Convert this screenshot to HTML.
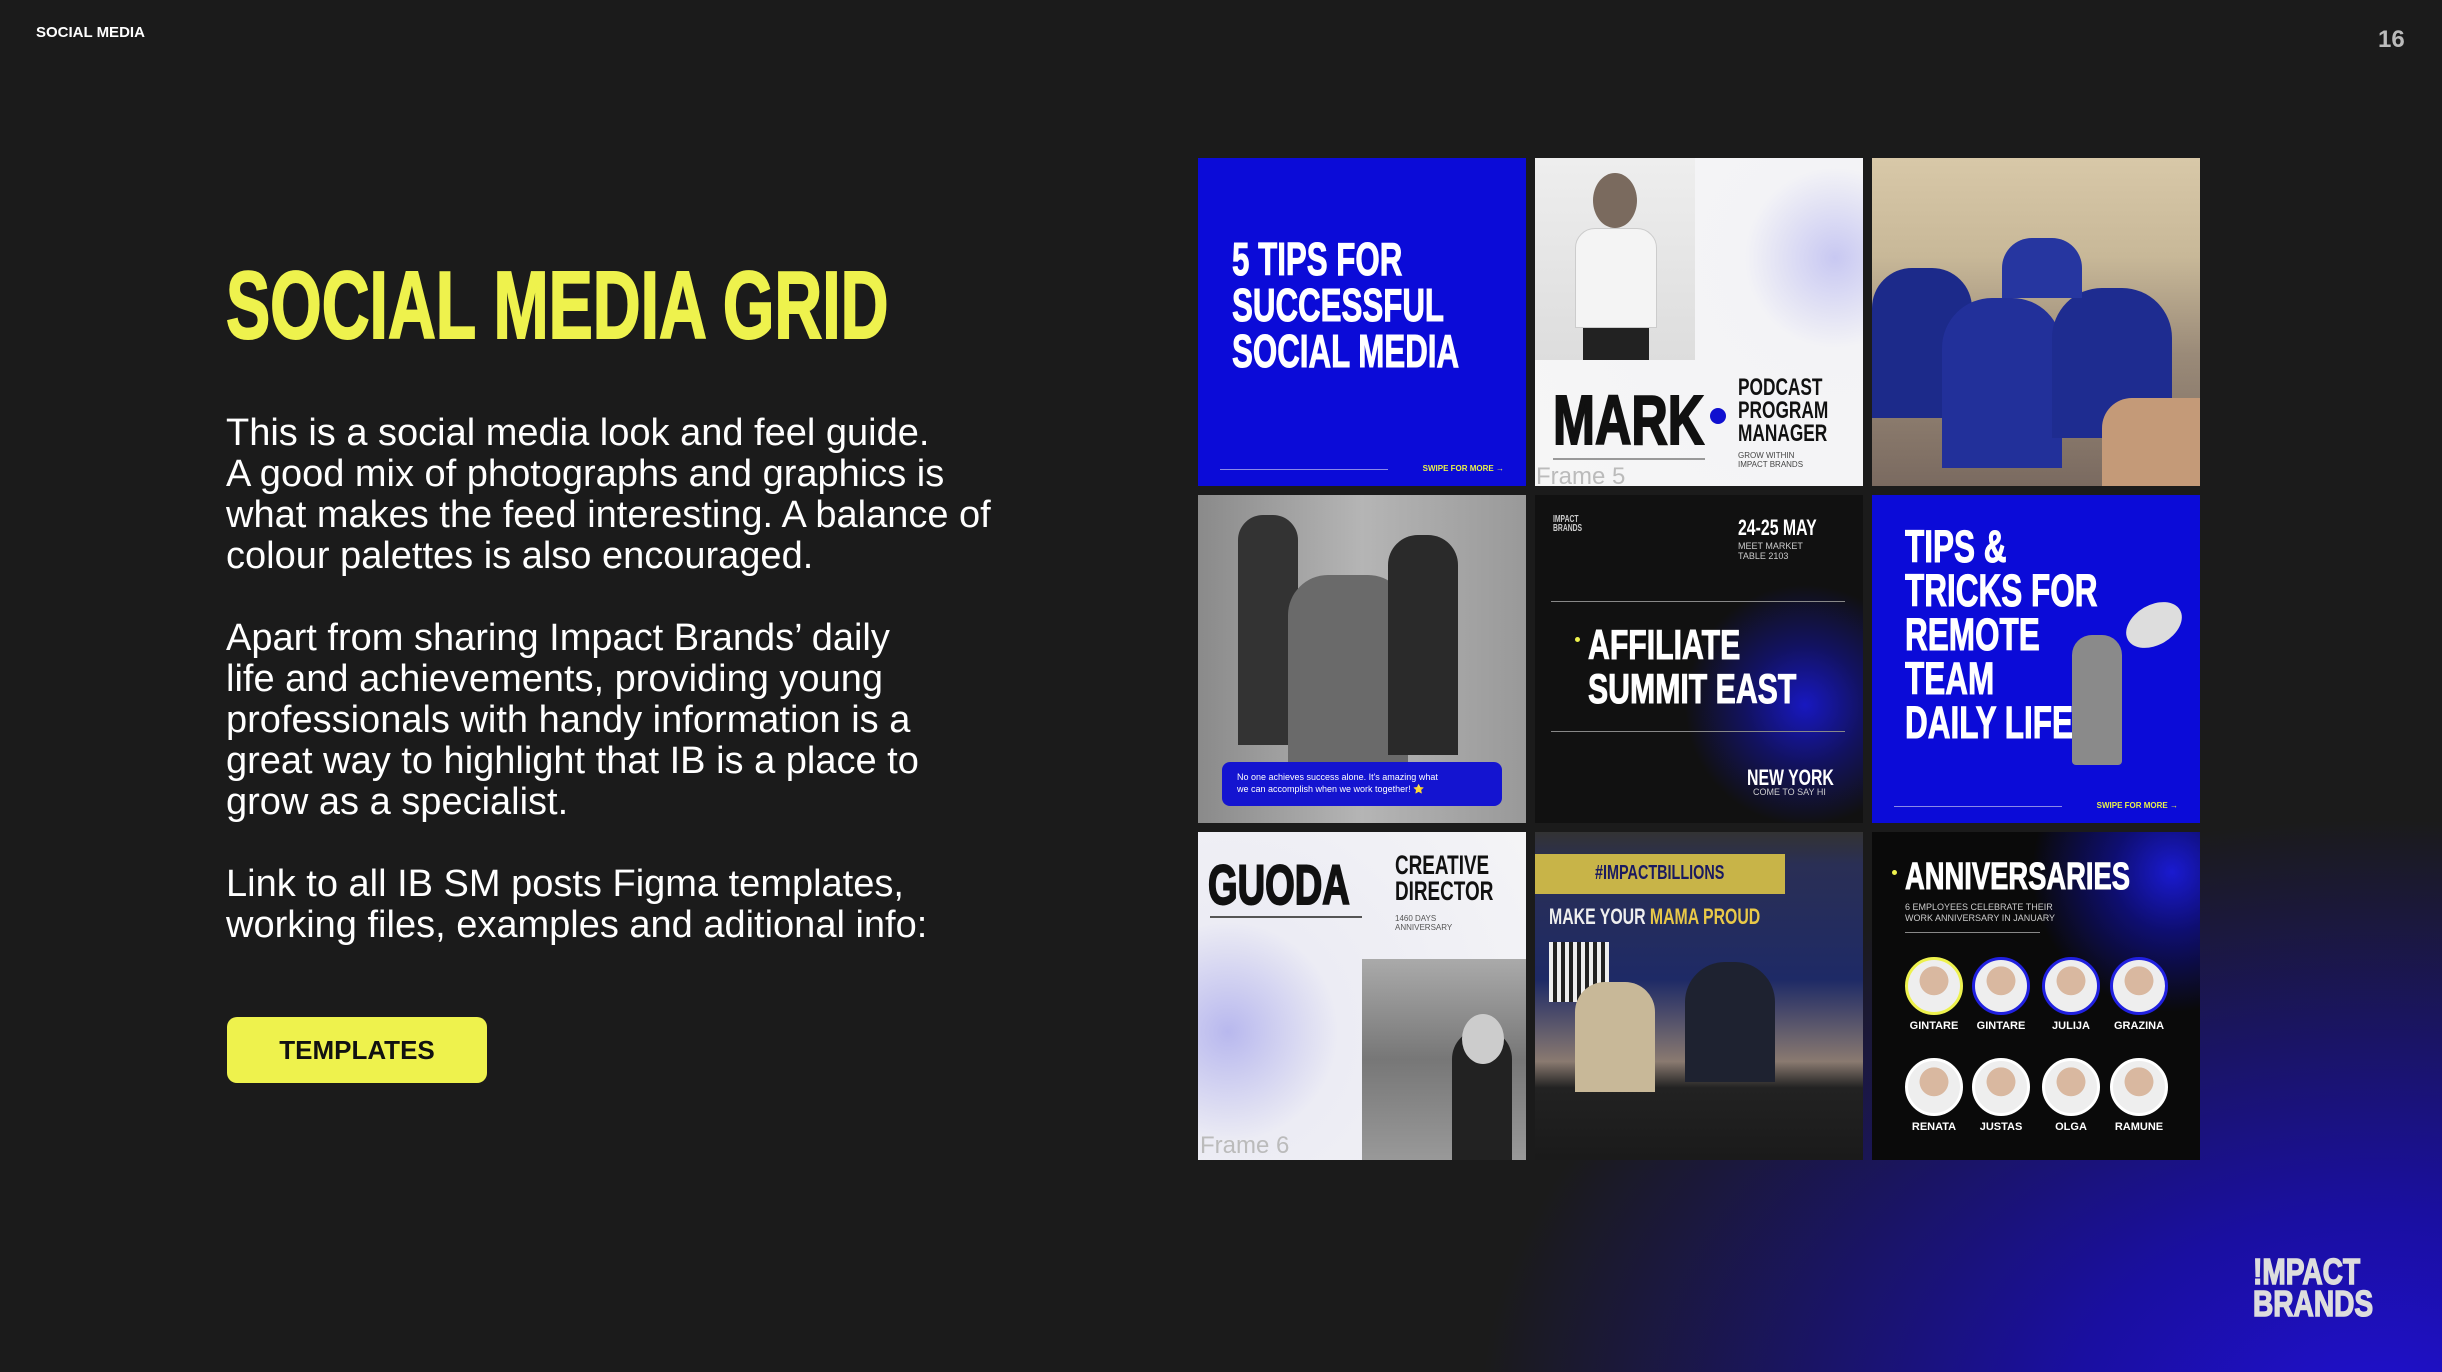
<!DOCTYPE html>
<html><head><meta charset="utf-8"><style>
*{margin:0;padding:0;box-sizing:border-box}
body{width:2442px;height:1372px;overflow:hidden;background:#1b1b1b;font-family:"Liberation Sans",sans-serif;position:relative}
.bg{position:absolute;inset:0;background:radial-gradient(ellipse 900px 600px at 2380px 1420px,#2010d0 0%,#1a0fa0 35%,rgba(27,27,27,0) 100%)}
.a{position:absolute}
.c{position:absolute;font-weight:bold;white-space:nowrap;transform-origin:left top;transform:scaleX(.68)}
.t{position:absolute;width:328px;height:328px;overflow:hidden}
.blue{background:#0b0bd8}
.sw{position:absolute;left:22px;right:22px;bottom:12px;height:10px}
.sw i{position:absolute;left:0;top:5px;width:168px;height:1px;background:#8a8ae8}
.sw b{position:absolute;right:0;top:0;font-size:8px;color:#e8f04a;font-weight:bold}
.circ{position:absolute;width:58px;height:58px;border-radius:50%;border:3px solid #2020e0;background:radial-gradient(circle at 50% 40%,#d9b8a0 0 35%,#eee 36% 100%)}
.nm{position:absolute;width:70px;text-align:center;color:#fff;font-size:11px;font-weight:bold}
</style></head><body>
<div class="bg"></div>
<div class="a" style="left:36px;top:24px;color:#fff;font-size:15px;font-weight:bold">SOCIAL MEDIA</div>
<div class="a" style="left:2378px;top:26px;color:#bbb;font-size:24px;font-weight:bold">16</div>
<div class="c" style="left:226px;top:251px;font-size:96px;color:#eef24d;transform:scaleX(.69);-webkit-text-stroke:2px #eef24d">SOCIAL MEDIA GRID</div>
<div class="a" style="left:226px;top:413px;color:#fff;font-size:38px;line-height:41px;white-space:nowrap">This is a social media look and feel guide.<br>A good mix of photographs and graphics is<br>what makes the feed interesting. A balance of<br>colour palettes is also encouraged.<br><br>Apart from sharing Impact Brands’ daily<br>life and achievements, providing young<br>professionals with handy information is a<br>great way to highlight that IB is a place to<br>grow as a specialist.<br><br>Link to all IB SM posts Figma templates,<br>working files, examples and aditional info:</div>
<div class="a" style="left:227px;top:1017px;width:260px;height:66px;border-radius:10px;background:#eef24d;color:#111;font-size:26px;font-weight:bold;text-align:center;line-height:66px">TEMPLATES</div>

<div class="a" style="left:1198px;top:158px;width:1002px;height:1002px">
<div class="t blue" style="left:0;top:0">
<div class="c" style="left:34px;top:78px;font-size:46px;line-height:46px;color:#fff;-webkit-text-stroke:1px #fff">5 TIPS FOR<br>SUCCESSFUL<br>SOCIAL MEDIA</div>
<div class="sw"><i></i><b>SWIPE FOR MORE →</b></div>
</div>
<div class="t" style="left:337px;top:0;background:radial-gradient(circle at 300px 100px,#c8c8f2 0,#f3f3f6 90px,#f6f6f6 100%)">
<div class="a" style="left:0;top:0;width:160px;height:202px;background:linear-gradient(#eee,#ddd)"><div class="a" style="left:58px;top:15px;width:44px;height:55px;border-radius:50%;background:#7a6a5e"></div><div class="a" style="left:40px;top:70px;width:82px;height:100px;border-radius:20px 20px 0 0;background:#f4f4f4;border:1px solid #ccc"></div><div class="a" style="left:48px;top:170px;width:66px;height:32px;background:#222"></div></div>
<div class="c" style="left:18px;top:222px;font-size:70px;color:#111;transform:scaleX(.72);-webkit-text-stroke:2px #111">MARK</div>
<div class="a" style="left:175px;top:250px;width:16px;height:16px;border-radius:50%;background:#1010d0"></div>
<div class="c" style="left:203px;top:218px;font-size:24px;line-height:23px;color:#111;transform:scaleX(.72)">PODCAST<br>PROGRAM<br>MANAGER</div>
<div class="a" style="left:203px;top:293px;font-size:8px;color:#444;line-height:9px">GROW WITHIN<br>IMPACT BRANDS</div>
<div class="a" style="left:18px;top:300px;width:152px;height:2px;background:#999"></div>
<div class="a" style="left:1px;top:305px;font-size:24px;color:#bbb">Frame 5</div>
</div>
<div class="t" style="left:674px;top:0;background:linear-gradient(180deg,#d8c8a8 0,#c8b898 30%,#9a8a78 60%,#7a6a60 100%)">
<div class="a" style="left:0;top:110px;width:100px;height:150px;background:#1c2a8a;border-radius:40px 40px 0 0"></div>
<div class="a" style="left:70px;top:140px;width:120px;height:170px;background:#22309a;border-radius:50px 50px 0 0"></div>
<div class="a" style="left:180px;top:130px;width:120px;height:150px;background:#1e2c90;border-radius:50px 50px 0 0"></div>
<div class="a" style="left:130px;top:80px;width:80px;height:60px;background:#2636a0;border-radius:30px 30px 0 0"></div>
<div class="a" style="left:230px;top:240px;width:98px;height:88px;background:#c49a78;border-radius:30px 0 0 0"></div>
</div>
<div class="t" style="left:0;top:337px;background:linear-gradient(90deg,#8a8a8a,#b5b5b5 50%,#999)">
<div class="a" style="left:40px;top:20px;width:60px;height:230px;background:#333;border-radius:25px 25px 0 0"></div>
<div class="a" style="left:90px;top:80px;width:120px;height:200px;background:#6a6a6a;border-radius:40px 40px 0 0"></div>
<div class="a" style="left:190px;top:40px;width:70px;height:220px;background:#2a2a2a;border-radius:30px 30px 0 0"></div>
<div class="a" style="left:24px;top:267px;width:280px;height:44px;border-radius:8px;background:#1414d0;color:#fff;font-size:9px;line-height:12px;padding:9px 15px">No one achieves success alone. It's amazing what<br>we can accomplish when we work together! ⭐</div>
</div>
<div class="t" style="left:337px;top:337px;background:radial-gradient(circle at 270px 210px,#1818c0 0,#121260 60px,#111 120px)">
<div class="c" style="left:18px;top:20px;font-size:10px;line-height:9px;color:#ccc">IMPACT<br>BRANDS</div>
<div class="c" style="left:203px;top:20px;font-size:22px;color:#fff;transform:scaleX(.72)">24-25 MAY</div>
<div class="a" style="left:203px;top:46px;font-size:9px;line-height:10px;color:#ccc">MEET MARKET<br>TABLE 2103</div>
<div class="a" style="left:16px;top:106px;width:294px;height:1px;background:#888"></div>
<div class="a" style="left:40px;top:142px;width:5px;height:5px;border-radius:50%;background:#eef24d"></div>
<div class="c" style="left:53px;top:128px;font-size:42px;line-height:44px;color:#fff;transform:scaleX(.72);-webkit-text-stroke:1px #fff">AFFILIATE<br>SUMMIT EAST</div>
<div class="a" style="left:16px;top:236px;width:294px;height:1px;background:#888"></div>
<div class="c" style="left:212px;top:270px;font-size:22px;color:#fff;transform:scaleX(.72)">NEW YORK</div>
<div class="a" style="left:218px;top:292px;font-size:9px;color:#ccc">COME TO SAY HI</div>
</div>
<div class="t blue" style="left:674px;top:337px">
<div class="c" style="left:33px;top:30px;font-size:45px;line-height:44px;color:#fff;transform:scaleX(.7);-webkit-text-stroke:1px #fff">TIPS &amp;<br>TRICKS FOR<br>REMOTE<br>TEAM<br>DAILY LIFE</div>
<div class="a" style="left:200px;top:140px;width:50px;height:130px;background:#8a8a8a;border-radius:20px 20px 4px 4px"></div>
<div class="a" style="left:252px;top:110px;width:60px;height:40px;border-radius:50%;background:#ddd;transform:rotate(-30deg)"></div>
<div class="sw"><i></i><b>SWIPE FOR MORE →</b></div>
</div>
<div class="t" style="left:0;top:674px;background:radial-gradient(circle at 30px 200px,#b8b8ee 0,#ececf4 110px,#f4f4f6 100%)">
<div class="c" style="left:10px;top:20px;font-size:56px;color:#111;transform:scaleX(.68);-webkit-text-stroke:2px #111">GUODA</div>
<div class="a" style="left:12px;top:84px;width:152px;height:2px;background:#555"></div>
<div class="c" style="left:197px;top:20px;font-size:27px;line-height:26px;color:#111;transform:scaleX(.7)">CREATIVE<br>DIRECTOR</div>
<div class="a" style="left:197px;top:82px;font-size:8px;line-height:9px;color:#555">1460 DAYS<br>ANNIVERSARY</div>
<div class="a" style="left:164px;top:127px;width:164px;height:201px;background:linear-gradient(180deg,#aaa,#777 50%,#999)"><div class="a" style="left:90px;top:70px;width:60px;height:131px;border-radius:30px 30px 0 0;background:#222"></div><div class="a" style="left:100px;top:55px;width:42px;height:50px;border-radius:50%;background:#ccc"></div></div>
<div class="a" style="left:2px;top:300px;font-size:24px;color:#bbb">Frame 6</div>
</div>
<div class="t" style="left:337px;top:674px;background:linear-gradient(180deg,#333 0,#2a2f55 10%,#1e2a66 45%,#8a7a70 70%,#222 78%,#1a1a1a 100%)">
<div class="a" style="left:0;top:22px;width:250px;height:40px;background:#c8b448"></div>
<div class="c" style="left:60px;top:30px;font-size:20px;color:#1a1a60;transform:scaleX(.72)">#IMPACTBILLIONS</div>
<div class="c" style="left:14px;top:72px;font-size:22px;color:#eee;transform:scaleX(.72)">MAKE YOUR <span style="color:#e8c848">MAMA PROUD</span></div>
<div class="a" style="left:14px;top:110px;width:60px;height:60px;background:repeating-linear-gradient(90deg,#eee 0 4px,#222 4px 8px)"></div>
<div class="a" style="left:40px;top:150px;width:80px;height:110px;border-radius:30px 30px 0 0;background:#c8b898"></div>
<div class="a" style="left:150px;top:130px;width:90px;height:120px;border-radius:40px 40px 0 0;background:#1e2230"></div>
</div>
<div class="t" style="left:674px;top:674px;background:radial-gradient(circle at 300px 40px,#1a1ad0 0,#0e0e70 60px,#0a0a0a 140px)">
<div class="a" style="left:20px;top:38px;width:5px;height:5px;border-radius:50%;background:#eef24d"></div>
<div class="c" style="left:33px;top:24px;font-size:38px;color:#fff;transform:scaleX(.72);-webkit-text-stroke:1px #fff">ANNIVERSARIES</div>
<div class="a" style="left:33px;top:70px;font-size:9px;line-height:11px;color:#ccc">6 EMPLOYEES CELEBRATE THEIR<br>WORK ANNIVERSARY IN JANUARY</div>
<div class="a" style="left:33px;top:100px;width:135px;height:1px;background:#888"></div>
<div class="circ" style="left:33px;top:125px;border-color:#eef24d"></div><div class="circ" style="left:100px;top:125px"></div><div class="circ" style="left:170px;top:125px"></div><div class="circ" style="left:238px;top:125px"></div>
<div class="nm" style="left:27px;top:188px">GINTARE</div><div class="nm" style="left:94px;top:188px">GINTARE</div><div class="nm" style="left:164px;top:188px">JULIJA</div><div class="nm" style="left:232px;top:188px">GRAZINA</div>
<div class="circ" style="left:33px;top:226px;border-color:#fff"></div><div class="circ" style="left:100px;top:226px;border-color:#fff"></div><div class="circ" style="left:170px;top:226px;border-color:#fff"></div><div class="circ" style="left:238px;top:226px;border-color:#fff"></div>
<div class="nm" style="left:27px;top:289px">RENATA</div><div class="nm" style="left:94px;top:289px">JUSTAS</div><div class="nm" style="left:164px;top:289px">OLGA</div><div class="nm" style="left:232px;top:289px">RAMUNE</div>
</div>
</div>

<div class="c" style="left:2253px;top:1256px;font-size:36px;line-height:32px;color:#ddd;transform:scaleX(.78);-webkit-text-stroke:1.5px #ddd">!MPACT<br>BRANDS</div>
</body></html>
